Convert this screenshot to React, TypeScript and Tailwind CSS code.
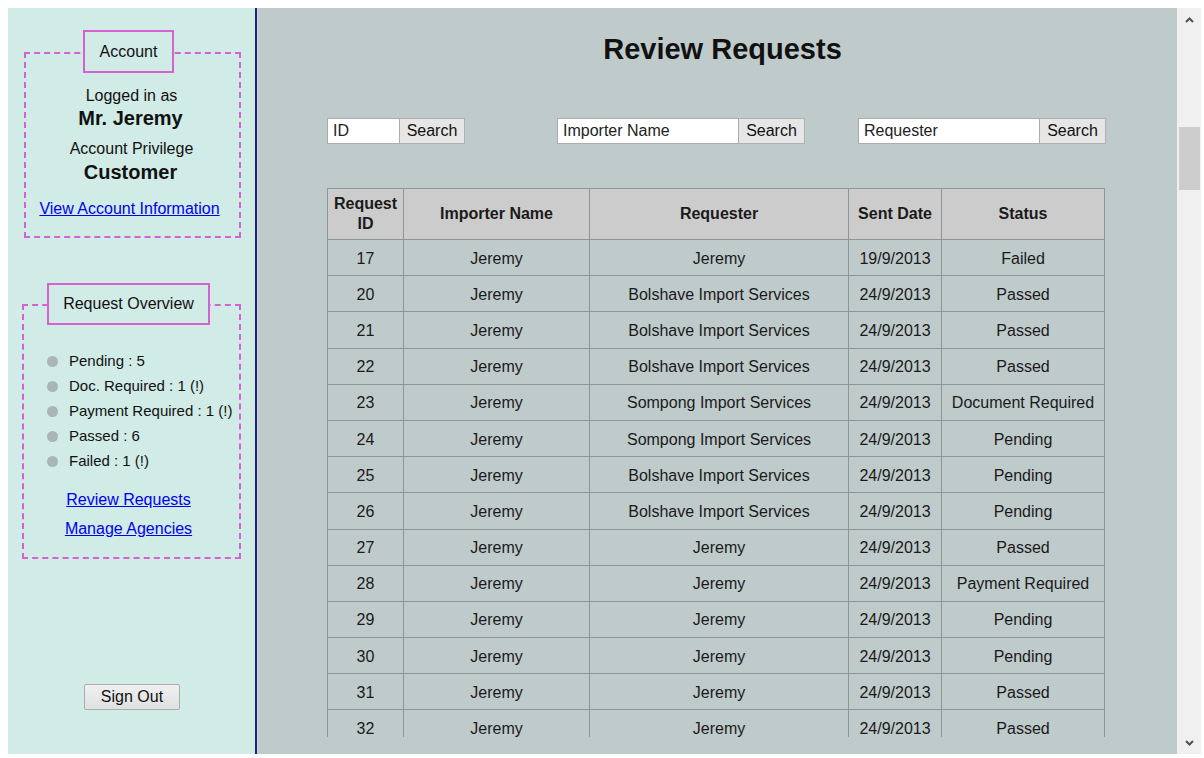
import React from "react";

const rows: [string, string, string, string, string][] = [
  ["17", "Jeremy", "Jeremy", "19/9/2013", "Failed"],
  ["20", "Jeremy", "Bolshave Import Services", "24/9/2013", "Passed"],
  ["21", "Jeremy", "Bolshave Import Services", "24/9/2013", "Passed"],
  ["22", "Jeremy", "Bolshave Import Services", "24/9/2013", "Passed"],
  ["23", "Jeremy", "Sompong Import Services", "24/9/2013", "Document Required"],
  ["24", "Jeremy", "Sompong Import Services", "24/9/2013", "Pending"],
  ["25", "Jeremy", "Bolshave Import Services", "24/9/2013", "Pending"],
  ["26", "Jeremy", "Bolshave Import Services", "24/9/2013", "Pending"],
  ["27", "Jeremy", "Jeremy", "24/9/2013", "Passed"],
  ["28", "Jeremy", "Jeremy", "24/9/2013", "Payment Required"],
  ["29", "Jeremy", "Jeremy", "24/9/2013", "Pending"],
  ["30", "Jeremy", "Jeremy", "24/9/2013", "Pending"],
  ["31", "Jeremy", "Jeremy", "24/9/2013", "Passed"],
  ["32", "Jeremy", "Jeremy", "24/9/2013", "Passed"],
];

const overview = [
  "Pending : 5",
  "Doc. Required : 1 (!)",
  "Payment Required : 1 (!)",
  "Passed : 6",
  "Failed : 1 (!)",
];

function SearchBox({ label, inputW, btnW }: { label: string; inputW: string; btnW: string }) {
  return (
    <div className="flex h-[26px]">
      <div
        className={`${inputW} h-[26px] bg-white border border-[#a9adad] pl-[5px] text-[16px] leading-[23px] text-[#222]`}
      >
        {label}
      </div>
      <button className={`${btnW} h-[26px] bg-[#e6e6e6] border border-[#adb1b1] border-l-0 text-[16px] leading-[24px] text-[#111]`}>
        Search
      </button>
    </div>
  );
}

export default function App() {
  return (
    <div
      className="w-[1204px] h-[758px] bg-white pt-[8px] pl-[8px] overflow-hidden"
      style={{ fontFamily: '"Liberation Sans", Arial, sans-serif' }}
    >
      <div className="flex w-[1193px] h-[746px]">
        {/* Sidebar */}
        <div className="w-[249px] h-full bg-[#d1ebe7] border-r-2 border-[#1b247a] flex flex-col text-[#111]">
          {/* Account box */}
          <div className="relative mt-[44px] ml-[16px] w-[217px] h-[186px] border-2 border-dashed border-[#d462d0] flex flex-col items-center">
            <div className="absolute top-[-24px] left-[57px] w-[91px] h-[43px] border-2 border-[#d462d0] bg-[#d1ebe7] flex items-center justify-center text-[16px]">
              Account
            </div>
            <div className="mt-[33px] mr-[2px] text-[16px] leading-[18px]">Logged in as</div>
            <div className="mt-[1px] mr-[4px] text-[20px] leading-[24px] font-bold">Mr. Jeremy</div>
            <div className="mt-[10px] mr-[2px] text-[16px] leading-[18px]">Account Privilege</div>
            <div className="mt-[2px] mr-[4px] text-[20px] leading-[24px] font-bold">Customer</div>
            <a href="#" className="mt-[16px] mr-[6px] text-[16px] leading-[18px] text-[#0000ee] underline">
              View Account Information
            </a>
          </div>

          {/* Request Overview box */}
          <div className="relative mt-[66px] ml-[14px] w-[219px] h-[255px] border-2 border-dashed border-[#d462d0] flex flex-col">
            <div className="absolute top-[-23px] left-[23px] w-[163px] h-[42px] border-2 border-[#d462d0] bg-[#d1ebe7] flex items-center justify-center text-[16px]">
              Request Overview
            </div>
            <ul className="mt-[43px] ml-[23px] flex flex-col">
              {overview.map((t) => (
                <li key={t} className="flex items-center h-[25px] text-[15px]">
                  <span className="w-[11px] h-[11px] rounded-full bg-[#a9b6b3] mr-[11px] shrink-0" />
                  <span>{t}</span>
                </li>
              ))}
            </ul>
            <div className="flex flex-col items-center mr-[6px]">
              <a href="#" className="mt-[17px] text-[16px] leading-[18px] text-[#0000ee] underline">
                Review Requests
              </a>
              <a href="#" className="mt-[11px] text-[16px] leading-[18px] text-[#0000ee] underline">
                Manage Agencies
              </a>
            </div>
          </div>

          <button className="mt-[125px] ml-[76px] w-[96px] h-[26px] bg-gradient-to-b from-[#f0f0f0] to-[#e0e0e0] border border-[#acacac] rounded-[2px] text-[16px] leading-[24px] text-[#111]">
            Sign Out
          </button>
        </div>

        {/* Main */}
        <div className="w-[920px] h-full bg-[#bfcacb] border-l border-[#cbd4d4] flex flex-col pb-[17px]">
          <div className="flex-1 overflow-hidden">
            <h1 className="pt-[25px] pl-[10px] text-center text-[29px] leading-[32px] font-bold text-[#111]">
              Review Requests
            </h1>
            <div className="mt-[53px] ml-[69px] flex">
              <SearchBox label="ID" inputW="w-[73px]" btnW="w-[65px]" />
              <div className="ml-[92px]">
                <SearchBox label="Importer Name" inputW="w-[182px]" btnW="w-[66px]" />
              </div>
              <div className="ml-[53px]">
                <SearchBox label="Requester" inputW="w-[182px]" btnW="w-[66px]" />
              </div>
            </div>
            <table className="mt-[44px] ml-[69px] w-[777px] table-fixed border-collapse border border-[#8c9797] text-[16px] text-[#1a1a1a]">
              <colgroup>
                <col className="w-[76px]" />
                <col className="w-[186px]" />
                <col className="w-[259px]" />
                <col className="w-[93px]" />
                <col className="w-[163px]" />
              </colgroup>
              <thead>
                <tr className="bg-[#cccccc]">
                  {["Request ID", "Importer Name", "Requester", "Sent Date", "Status"].map((h) => (
                    <th key={h} className="h-[51px] border border-[#8c9797] font-bold leading-[20px] px-[4px] text-center">
                      {h}
                    </th>
                  ))}
                </tr>
              </thead>
              <tbody>
                {rows.map((r) => (
                  <tr key={r[0]}>
                    {r.map((c, i) => (
                      <td key={i} className="h-[36.2px] pt-[2px] border border-[#8c9797] text-center leading-[18px] whitespace-nowrap">
                        {c}
                      </td>
                    ))}
                  </tr>
                ))}
              </tbody>
            </table>
          </div>
        </div>

        {/* Scrollbar */}
        <div className="w-[24px] h-full bg-[#f0f0f0] flex flex-col items-center">
          <div className="h-[20px] w-full flex items-center justify-center pt-[4px]">
            <svg width="9" height="6" viewBox="0 0 9 6">
              <polyline points="1,5 4.5,1.5 8,5" fill="none" stroke="#505050" strokeWidth="2" />
            </svg>
          </div>
          <div className="mt-[99px] w-[21px] h-[63px] bg-[#cdcdcd]" />
          <div className="flex-1" />
          <div className="h-[22px] w-full flex items-center justify-center">
            <svg width="9" height="6" viewBox="0 0 9 6">
              <polyline points="1,1 4.5,4.5 8,1" fill="none" stroke="#505050" strokeWidth="2" />
            </svg>
          </div>
        </div>
      </div>
    </div>
  );
}
